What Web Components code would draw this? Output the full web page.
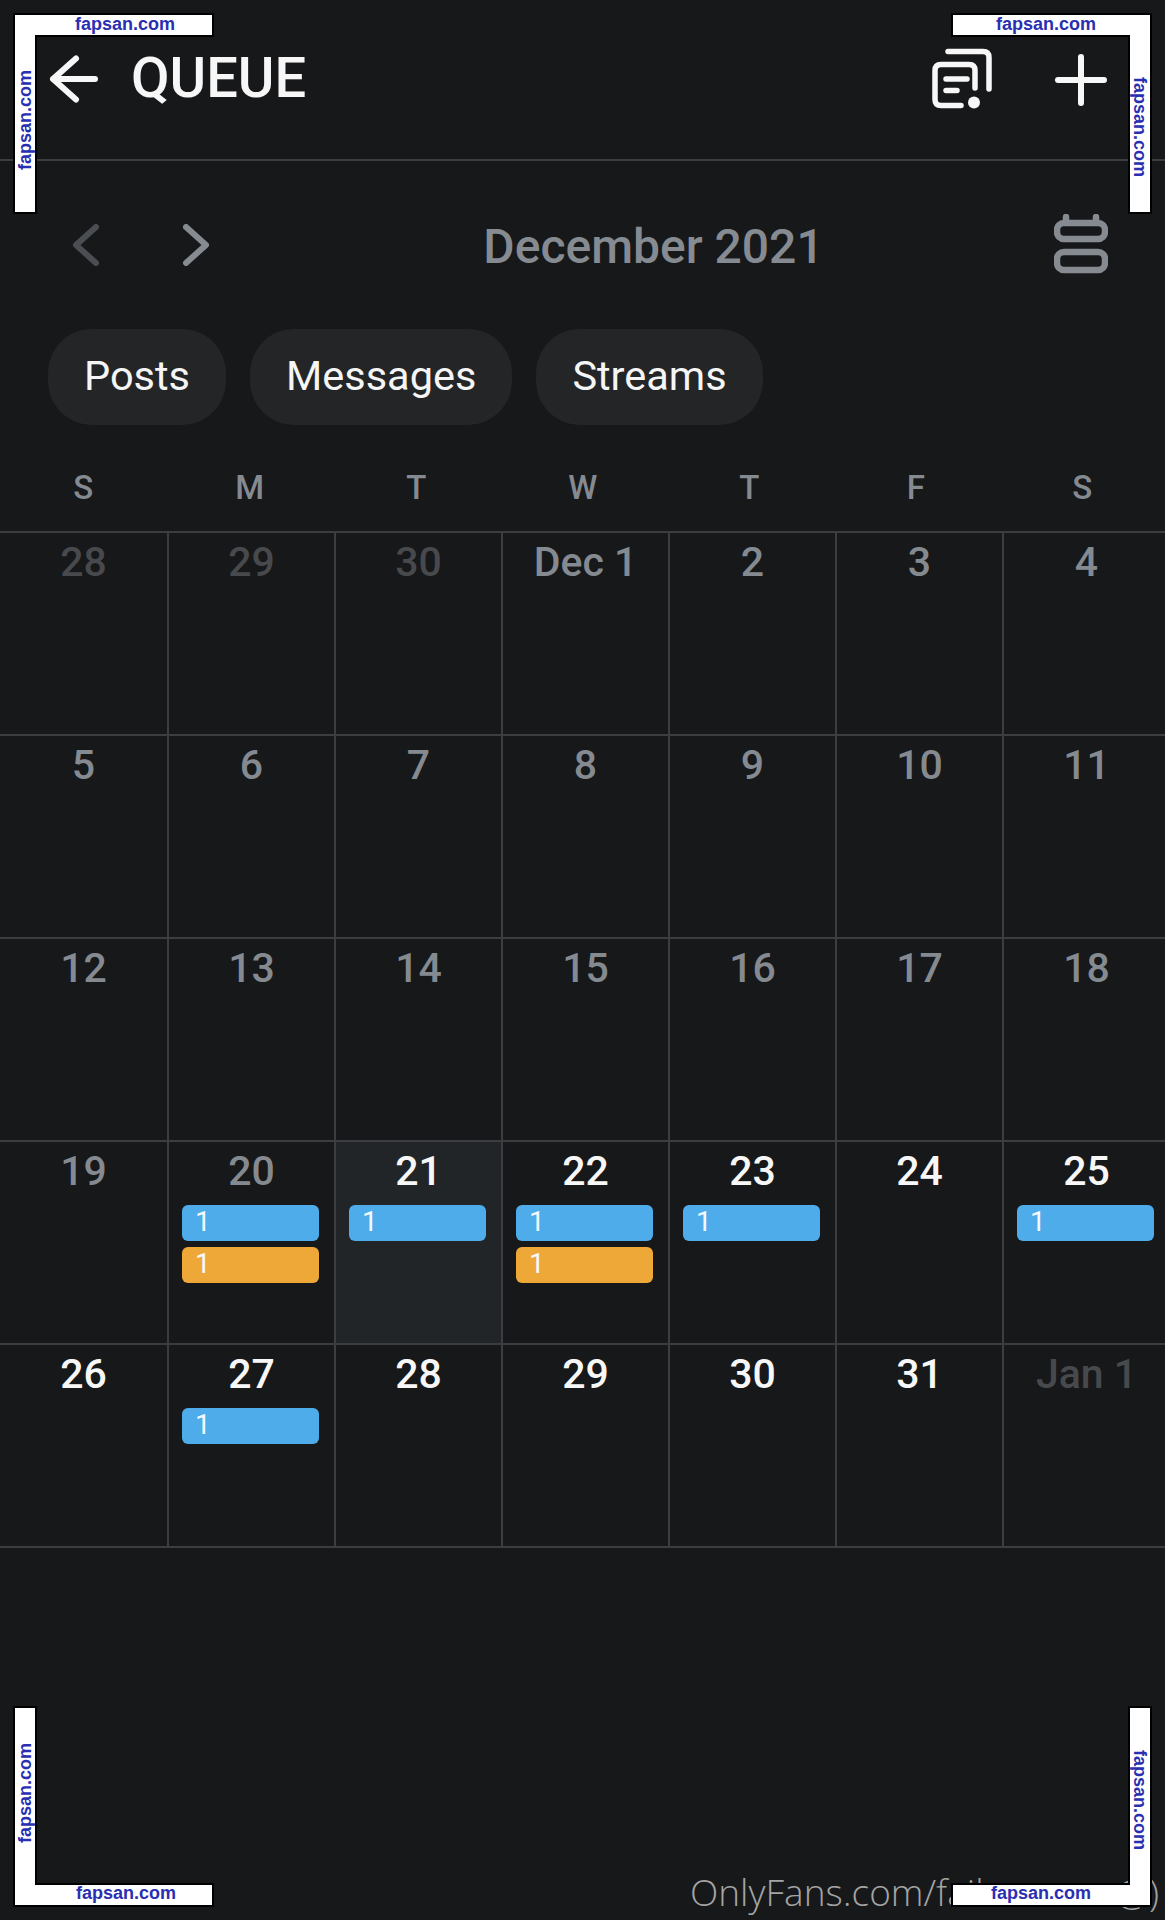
<!DOCTYPE html>
<html>
<head>
<meta charset="utf-8">
<title>Queue</title>
<style>
html, body { margin: 0; padding: 0; background: #17181a; }
body { width: 1165px; height: 1920px; position: relative; overflow: hidden; font-family: Roboto, "Liberation Sans", sans-serif; }
</style>
</head>
<body>
<queue-app></queue-app>
<foot-mark></foot-mark>
<corner-mark corner="tl"></corner-mark>
<corner-mark corner="tr"></corner-mark>
<corner-mark corner="bl"></corner-mark>
<corner-mark corner="br"></corner-mark>

<script>
class QueueHeader extends HTMLElement {
    constructor() {
        super();
        this.attachShadow({ mode: "open" });
        this.shadowRoot.innerHTML = `
        <style>
            :host { display: flex; align-items: center; height: 159px; border-bottom: 2px solid #3b3d40; color: #f7f7f7; }
            svg { display: block; fill: none; stroke: currentColor; stroke-width: 6; stroke-linecap: round; stroke-linejoin: round; }
            h1 { margin: 0 0 0 30px; font: 500 56px/1 Roboto, sans-serif; flex: 1; padding-bottom: 3px; }
            .back { margin-left: 47px; }
            .stack { margin-right: 59px; stroke-width: 5.5; }
            .plus { margin-right: 58px; }
        </style>
        <svg class="back" width="54" height="54" viewBox="0 0 54 54"><path d="M29 5.5 L6 26 L29 46.5 M6 26 H48"/></svg>
        <h1>QUEUE</h1>
        <svg class="stack" width="66" height="66" viewBox="0 0 66 66">
            <path d="M18 4.5 H53 Q59 4.5 59 10.5 V42"/>
            <path d="M31 58.5 H11 Q5 58.5 5 52.5 V23.5 Q5 17.5 11 17.5 H39 Q45 17.5 45 23.5 V41"/>
            <path d="M16 32 H37 M16 43.5 H27"/>
            <circle cx="44" cy="55.5" r="6" fill="currentColor" stroke="none"/>
        </svg>
        <svg class="plus" width="52" height="52" viewBox="0 0 52 52"><path d="M3 26 H49 M26 3 V49"/></svg>
        `;
    }
}
customElements.define("queue-header", QueueHeader);

class MonthNav extends HTMLElement {
    constructor() {
        super();
        this.attachShadow({ mode: "open" });
        this.shadowRoot.innerHTML = `
        <style>
            :host { display: grid; grid-template-columns: 1fr auto 1fr; align-items: center; height: 168px; color: #868b92; }
            svg { display: block; fill: none; stroke: currentColor; stroke-width: 6; stroke-linecap: round; stroke-linejoin: round; }
            .arrows { display: flex; margin-left: 73px; gap: 84px; }
            .off { color: #4a4d51; }
            .title { font: 500 48px/1 Roboto, sans-serif; margin: 4px 0 0 142px; }
            .cal { justify-self: end; margin: 0 57px 3px 0; stroke-width: 6.5; }
        </style>
        <div class="arrows">
            <svg class="off" width="26" height="42" viewBox="0 0 26 42"><path d="M23 3 L3 21 L23 39"/></svg>
            <svg width="26" height="42" viewBox="0 0 26 42"><path d="M3 3 L23 21 L3 39"/></svg>
        </div>
        <div class="title">December 2021</div>
        <svg class="cal" width="54" height="60" viewBox="0 0 54 60">
            <rect x="3" y="9" width="48" height="16" rx="7"/>
            <rect x="3" y="38" width="48" height="18" rx="7"/>
            <path d="M12 3 V8 M42 3 V8"/>
        </svg>
        `;
    }
}
customElements.define("month-nav", MonthNav);

class FilterChip extends HTMLElement {
    constructor() {
        super();
        this.attachShadow({ mode: "open" });
        this.shadowRoot.innerHTML = `
        <style>
            :host { display: flex; align-items: center; box-sizing: border-box; height: 96px; padding: 0 36px 3px; border-radius: 44px; background: #242527; color: #f5f5f5; font: 400 41.5px/1 Roboto, sans-serif; }
        </style>
        <slot></slot>
        `;
    }
}
customElements.define("filter-chip", FilterChip);

class EventBar extends HTMLElement {
    constructor() {
        super();
        this.attachShadow({ mode: "open" });
        this.shadowRoot.innerHTML = `
        <style>
            :host { display: block; height: 36px; margin: 0 15px 6px 13px; padding-left: 13px; border-radius: 6px; background: #4eaceb; color: #f5f9fd; font: 400 28px/34px Roboto, sans-serif; text-align: left; }
            :host([kind="orange"]) { background: #eea838; }
        </style>
        <slot></slot>
        `;
    }
}
customElements.define("event-bar", EventBar);

class DayCell extends HTMLElement {
    constructor() {
        super();
        this.attachShadow({ mode: "open" });
    }
    connectedCallback() {
        this.shadowRoot.innerHTML = `
        <style>
            :host { display: block; height: 203px; box-sizing: border-box; border-right: 2px solid #3b3d40; border-bottom: 2px solid #3b3d40; color: #858a91; text-align: center; overflow: hidden; }
            :host([tone="off"]) { color: #47494d; }
            :host([tone="on"]) { color: #f7f7f7; }
            :host([today]) { background: #212527; }
            .num { box-sizing: border-box; height: 63px; padding-top: 4px; font: 500 41px/50px Roboto, sans-serif; }
        </style>
        <div class="num">${this.getAttribute("num") || ""}</div>
        <slot></slot>
        `;
    }
}
customElements.define("day-cell", DayCell);

class CalendarGrid extends HTMLElement {
    constructor() {
        super();
        this.attachShadow({ mode: "open" });
        this.shadowRoot.innerHTML = `
        <style>
            :host { display: block; width: 1165px; overflow: hidden; }
            .week { display: grid; grid-template-columns: repeat(7, 166.5px); box-sizing: border-box; height: 106px; padding-top: 18px; align-items: center; color: #858a91; font: 500 33px/1 Roboto, sans-serif; text-align: center; }
            .days { display: grid; grid-template-columns: 169px repeat(6, 167px); width: 1171px; border-top: 2px solid #3b3d40; }
        </style>
        <div class="week"><span>S</span><span>M</span><span>T</span><span>W</span><span>T</span><span>F</span><span>S</span></div>
        <div class="days"><slot></slot></div>
        `;
    }
}
customElements.define("calendar-grid", CalendarGrid);

class QueueApp extends HTMLElement {
    constructor() {
        super();
        this.attachShadow({ mode: "open" });
        this.shadowRoot.innerHTML = `
        <style>
            :host { display: block; }
            .chips { display: flex; gap: 24px; padding-left: 48px; }
        </style>
        <queue-header></queue-header>
        <month-nav></month-nav>
        <div class="chips">
            <filter-chip>Posts</filter-chip>
            <filter-chip>Messages</filter-chip>
            <filter-chip>Streams</filter-chip>
        </div>
        <calendar-grid id="grid"></calendar-grid>
        `;
        const grid = this.shadowRoot.getElementById("grid");
        const days = [
            ["28", "off"], ["29", "off"], ["30", "off"], ["Dec 1"], ["2"], ["3"], ["4"],
            ["5"], ["6"], ["7"], ["8"], ["9"], ["10"], ["11"],
            ["12"], ["13"], ["14"], ["15"], ["16"], ["17"], ["18"],
            ["19"], ["20", "", "bo"], ["21", "on", "b", true], ["22", "on", "bo"], ["23", "on", "b"], ["24", "on"], ["25", "on", "b"],
            ["26", "on"], ["27", "on", "b"], ["28", "on"], ["29", "on"], ["30", "on"], ["31", "on"], ["Jan 1", "off"]
        ];
        days.forEach(([num, tone, bars, today]) => {
            const cell = document.createElement("day-cell");
            cell.setAttribute("num", num);
            if (tone) cell.setAttribute("tone", tone);
            if (today) cell.setAttribute("today", "");
            (bars || "").split("").forEach(b => {
                const bar = document.createElement("event-bar");
                if (b === "o") bar.setAttribute("kind", "orange");
                bar.textContent = "1";
                cell.appendChild(bar);
            });
            grid.appendChild(cell);
        });
    }
}
customElements.define("queue-app", QueueApp);

class FootMark extends HTMLElement {
    constructor() {
        super();
        this.attachShadow({ mode: "open" });
        this.shadowRoot.innerHTML = `
        <style>
            :host { position: absolute; left: 690px; top: 1867px; width: 469px; display: flex; justify-content: space-between; color: #a4a4a4; font: 300 37px/1.35 "Open Sans", sans-serif; white-space: nowrap; }
        </style>
        <span>OnlyFans.com/fail</span><span>@)</span>
        `;
    }
}
customElements.define("foot-mark", FootMark);

const CORNERS = {
    tl: { left: 13, top: 13, flip: "none", h: [112, 11], v: [12, 107], rot: -90 },
    tr: { left: 951, top: 13, flip: "scaleX(-1)", h: [95, 11], v: [189, 114], rot: 90 },
    bl: { left: 13, top: 1706, flip: "scaleY(-1)", h: [113, 187], v: [12, 87], rot: -90 },
    br: { left: 951, top: 1706, flip: "scale(-1,-1)", h: [90, 187], v: [189, 94], rot: 90 }
};

class CornerMark extends HTMLElement {
    connectedCallback() {
        const c = CORNERS[this.getAttribute("corner")];
        this.attachShadow({ mode: "open" });
        this.shadowRoot.innerHTML = `
        <style>
            :host { position: absolute; left: ${c.left}px; top: ${c.top}px; width: 201px; height: 201px; color: #2a2fb2; font: 700 18px/1 "Liberation Sans", Arial, sans-serif; }
            svg { display: block; transform: ${c.flip}; }
            span { position: absolute; white-space: nowrap; }
            .h { left: ${c.h[0]}px; top: ${c.h[1]}px; transform: translate(-50%, -50%); }
            .v { left: ${c.v[0]}px; top: ${c.v[1]}px; transform: translate(-50%, -50%) rotate(${c.rot}deg); }
        </style>
        <svg width="201" height="201" viewBox="0 0 201 201"><path d="M1 1 H200 V23 H23 V200 H1 Z" fill="#fff" stroke="#000" stroke-width="2"/></svg>
        <span class="h">fapsan.com</span>
        <span class="v">fapsan.com</span>
        `;
    }
}
customElements.define("corner-mark", CornerMark);
</script>
</body>
</html>
